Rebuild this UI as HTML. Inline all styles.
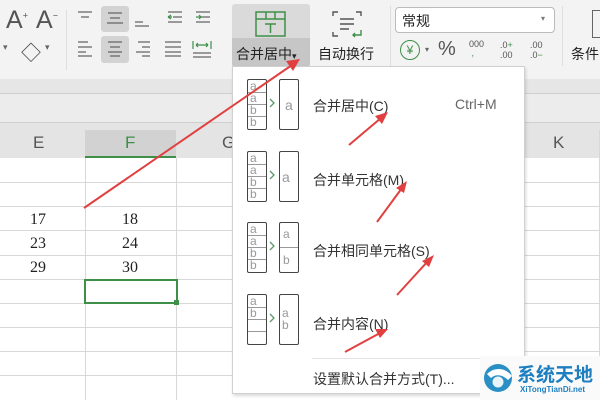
<!DOCTYPE html>
<html><head><meta charset="utf-8"><style>
*{margin:0;padding:0;box-sizing:border-box}
body{width:600px;height:400px;overflow:hidden;position:relative;background:#fff;font-family:"Liberation Sans","Noto Sans CJK SC",sans-serif;color:#333}
.a{position:absolute}
.t{position:absolute;font-size:14px;white-space:nowrap}
.hl{position:absolute;height:1px;background:#d8d8d8}
.vl{position:absolute;width:1px;background:#d8d8d8}
.cellbox{position:absolute;width:20px;height:51px;border:1.3px solid #444;border-radius:2px;background:#fff}
.ct{position:absolute;left:2px;font-size:12px;color:#999;line-height:12px}
.cl{position:absolute;left:0;right:0;height:1px;background:#999}
</style></head><body>
<div class="a" style="left:0;top:0;width:600px;height:79px;background:#f3f3f3"></div>
<div class="a" style="left:0;top:79px;width:600px;height:14px;background:#e6e6e6"></div>
<div class="a" style="left:0;top:93px;width:600px;height:30px;background:#ececec;border-top:1px solid #cfcfcf;border-bottom:1px solid #cfcfcf"></div>
<div class="a" style="left:0;top:123px;width:600px;height:35px;background:#e4e4e4"></div>
<div class="a" style="left:85px;top:130px;width:91px;height:28px;background:#d2d2d2;border-bottom:2px solid #3e8f47"></div>
<div class="t" style="left:33px;top:133px;font-size:17px;color:#555">E</div>
<div class="t" style="left:125px;top:133px;font-size:17px;color:#3e8f47">F</div>
<div class="t" style="left:222px;top:133px;font-size:17px;color:#555">G</div>
<div class="t" style="left:553px;top:133px;font-size:17px;color:#555">K</div>
<div class="hl" style="left:0;top:182px;width:600px"></div>
<div class="hl" style="left:0;top:206px;width:600px"></div>
<div class="hl" style="left:0;top:230px;width:600px"></div>
<div class="hl" style="left:0;top:255px;width:600px"></div>
<div class="hl" style="left:0;top:279px;width:600px"></div>
<div class="hl" style="left:0;top:303px;width:600px"></div>
<div class="hl" style="left:0;top:327px;width:600px"></div>
<div class="hl" style="left:0;top:351px;width:600px"></div>
<div class="hl" style="left:0;top:375px;width:600px"></div>
<div class="vl" style="left:85px;top:158px;height:242px"></div>
<div class="vl" style="left:176px;top:158px;height:242px"></div>
<div class="vl" style="left:599px;top:130px;height:270px"></div>
<div class="t" style="left:30px;top:211px;font-family:'Liberation Serif',serif;font-size:16px;color:#222">17</div>
<div class="t" style="left:122px;top:211px;font-family:'Liberation Serif',serif;font-size:16px;color:#222">18</div>
<div class="t" style="left:30px;top:235px;font-family:'Liberation Serif',serif;font-size:16px;color:#222">23</div>
<div class="t" style="left:122px;top:235px;font-family:'Liberation Serif',serif;font-size:16px;color:#222">24</div>
<div class="t" style="left:30px;top:259px;font-family:'Liberation Serif',serif;font-size:16px;color:#222">29</div>
<div class="t" style="left:122px;top:259px;font-family:'Liberation Serif',serif;font-size:16px;color:#222">30</div>
<div class="a" style="left:84px;top:279px;width:94px;height:25px;border:2px solid #3e8f47"></div>
<div class="a" style="left:174px;top:300px;width:5px;height:5px;background:#3e8f47"></div>
<div class="t" style="left:6px;top:6px;font-size:25px;color:#555;font-weight:300">A<sup style="font-size:9px">+</sup></div>
<div class="t" style="left:36px;top:6px;font-size:25px;color:#555">A<sup style="font-size:9px">−</sup></div>
<div class="t" style="left:3px;top:42px;font-size:9px;color:#666">▾</div>
<div class="t" style="left:21px;top:37px;font-size:20px;color:#444">◇</div>
<div class="t" style="left:45px;top:42px;font-size:9px;color:#666">▾</div>
<div class="a" style="left:66px;top:10px;width:1px;height:60px;background:#ddd"></div>
<div class="a" style="left:101px;top:6px;width:28px;height:26px;background:#d3d3d3;border-radius:3px"></div>
<div class="a" style="left:101px;top:36px;width:28px;height:27px;background:#d3d3d3;border-radius:3px"></div>
<svg class="a" style="left:70px;top:0" width="160" height="70" stroke="#666" stroke-width="1.2" fill="none">
<path d="M8 12h14M11 17h8M7 22h0"/>
<path d="M38 13h14M40 18h10M37 23h16"/>
<path d="M65 22h8M65 26h14"/>
<path d="M98 12h14M103 17h9M98 22h14"/><path d="M98 17h4M98 17l3-2M98 17l3 2" stroke="#3e8f47"/>
<path d="M126 12h14M131 17h9M126 22h14"/><path d="M126 17h5M129 15l2 2-2 2" stroke="#3e8f47"/>
<path d="M8 42h10M8 47h14M8 52h8M8 56h14"/>
<path d="M38 42h14M40 47h10M38 52h14M40 56h10"/>
<path d="M68 42h12M72 47h8M66 52h14M72 56h8"/>
<path d="M95 42h16M95 47h16M95 52h16M95 56h16"/>
<path d="M123 41v8M141 41v8M126 45h12M126 45l2-2M126 45l2 2M138 45l-2-2M138 45l-2 2" stroke="#3e8f47"/><path d="M123 53h18M123 57h18"/>
</svg>
<div class="a" style="left:232px;top:4px;width:78px;height:63px;background:#dadada;border-radius:3px"></div>
<div class="a" style="left:232px;top:38px;width:78px;height:29px;background:#c6c6c6;border-radius:0 0 3px 3px"></div>
<svg class="a" style="left:255px;top:11px" width="32" height="26" fill="none" stroke="#3e8f47" stroke-width="1.5"><rect x="1" y="1" width="29" height="24"/><path d="M1 8h29M11 1v7M20 1v7M10 13h11M15.5 13v9"/></svg>
<div class="t" style="left:236px;top:44px;color:#222">合并居中<span style="font-size:9px">▾</span></div>
<svg class="a" style="left:331px;top:10px" width="32" height="28" fill="none" stroke="#555" stroke-width="1.4"><path d="M2 6V2h5M25 2h5v4M2 22v4h5M9 9h14M9 14h14M9 19h9"/><path d="M30 20v5h-8M24 23l-2 2 2 2" stroke="#3e8f47"/></svg>
<div class="t" style="left:318px;top:44px;color:#222">自动换行</div>
<div class="a" style="left:390px;top:6px;width:1px;height:60px;background:#ddd"></div>
<div class="a" style="left:395px;top:7px;width:160px;height:26px;background:#fff;border:1px solid #bbb;border-radius:4px"></div>
<div class="t" style="left:402px;top:11px;color:#222">常规</div>
<div class="t" style="left:541px;top:14px;font-size:8px;color:#777">▾</div>
<div class="a" style="left:400px;top:40px;width:20px;height:20px;border:1.3px solid #3e8f47;border-radius:50%;color:#3e8f47;font-size:12px;text-align:center;line-height:18px">¥</div>
<div class="t" style="left:425px;top:45px;font-size:8px;color:#666">▾</div>
<div class="t" style="left:438px;top:38px;font-size:20px;color:#555">%</div>
<div class="t" style="left:469px;top:40px;font-size:9px;color:#555;line-height:9px">000<br><span style="color:#3e8f47">&nbsp;,</span></div>
<div class="t" style="left:500px;top:40px;font-size:9px;color:#555;line-height:10px">.0<span style="color:#3e8f47">+</span><br>.00</div>
<div class="t" style="left:530px;top:40px;font-size:9px;color:#555;line-height:10px">.00<br>.0<span style="color:#3e8f47">−</span></div>
<div class="a" style="left:562px;top:6px;width:1px;height:60px;background:#ddd"></div>
<div class="a" style="left:592px;top:10px;width:10px;height:28px;border:1.3px solid #666"></div>
<div class="t" style="left:571px;top:44px;color:#222">条件</div>
<div class="a" style="left:232px;top:66px;width:293px;height:328px;background:#fff;border:1px solid #d0d0d0;box-shadow:1px 2px 3px rgba(0,0,0,.15)"></div>
<div class="t" style="left:313px;top:96px">合并居中(C)</div>
<div class="t" style="left:455px;top:96px;color:#666">Ctrl+M</div>
<div class="t" style="left:313px;top:170px">合并单元格(M)</div>
<div class="t" style="left:313px;top:241px">合并相同单元格(S)</div>
<div class="t" style="left:313px;top:314px">合并内容(N)</div>
<div class="a" style="left:312px;top:358px;width:212px;height:1px;background:#e3e3e3"></div>
<div class="t" style="left:313px;top:369px">设置默认合并方式(T)...</div>
<div class="cellbox" style="left:247px;top:79px"><div class="ct" style="top:0">a</div><div class="cl" style="top:12px"></div><div class="ct" style="top:12px">a</div><div class="cl" style="top:24px"></div><div class="ct" style="top:24px">b</div><div class="cl" style="top:36px"></div><div class="ct" style="top:36px">b</div></div>
<div class="cellbox" style="left:279px;top:79px"><div class="ct" style="top:19px;left:5px;font-size:14px">a</div></div>
<div class="cellbox" style="left:247px;top:151px"><div class="ct" style="top:0">a</div><div class="cl" style="top:12px"></div><div class="ct" style="top:12px">a</div><div class="cl" style="top:24px"></div><div class="ct" style="top:24px">b</div><div class="cl" style="top:36px"></div><div class="ct" style="top:36px">b</div></div>
<div class="cellbox" style="left:279px;top:151px"><div class="ct" style="top:19px;left:2px;font-size:14px">a</div></div>
<div class="cellbox" style="left:247px;top:222px"><div class="ct" style="top:0">a</div><div class="cl" style="top:12px"></div><div class="ct" style="top:12px">a</div><div class="cl" style="top:24px"></div><div class="ct" style="top:24px">b</div><div class="cl" style="top:36px"></div><div class="ct" style="top:36px">b</div></div>
<div class="cellbox" style="left:279px;top:222px"><div class="ct" style="top:5px;left:3px">a</div><div class="cl" style="top:24px"></div><div class="ct" style="top:31px;left:3px">b</div></div>
<div class="cellbox" style="left:247px;top:294px"><div class="ct" style="top:0">a</div><div class="cl" style="top:12px"></div><div class="ct" style="top:12px">b</div><div class="cl" style="top:24px"></div><div class="cl" style="top:36px"></div></div>
<div class="cellbox" style="left:279px;top:294px"><div class="ct" style="top:12px;left:2px">a</div><div class="ct" style="top:24px;left:2px">b</div></div>
<svg class="a" style="left:268px;top:0" width="10" height="400" fill="none" stroke="#5a9a6a" stroke-width="1.3"><path d="M2 99l4 4-4 4M2 171l4 4-4 4M2 242l4 4-4 4M2 314l4 4-4 4"/></svg>
<svg class="a" style="left:0;top:0" width="600" height="400" stroke="#e04040" stroke-width="2" fill="#e04040">
<line x1="84" y1="208" x2="292" y2="65"/><polygon points="300,59 286,61 293,71" stroke="none"/>
<line x1="349" y1="145" x2="381" y2="118"/><polygon points="388,112 375,116 382,124" stroke="none"/>
<line x1="377" y1="222" x2="402" y2="188"/><polygon points="407,181 396,188 404,193" stroke="none"/>
<line x1="397" y1="295" x2="428" y2="261"/><polygon points="434,255 422,261 429,267" stroke="none"/>
<line x1="345" y1="352" x2="380" y2="333"/><polygon points="388,329 375,329 380,338" stroke="none"/>
</svg>
<div class="a" style="left:480px;top:356px;width:120px;height:44px;background:#fafafa"></div>
<svg class="a" style="left:482px;top:361px" width="34" height="34"><circle cx="16" cy="17" r="14" fill="#2a8fc4"/><path d="M5 13c6-6 17-8 25 2l-4 4c-6-6-13-6-17-2z" fill="#fff"/><circle cx="16" cy="21" r="5.5" fill="#e8f4fa"/></svg>
<div class="t" style="left:517px;top:360px;font-size:19px;font-weight:bold;color:#1d7fc0">系统天地</div>
<div class="t" style="left:520px;top:385px;font-size:8px;font-weight:bold;color:#1d7fc0">XiTongTianDi.net</div>
</body></html>
